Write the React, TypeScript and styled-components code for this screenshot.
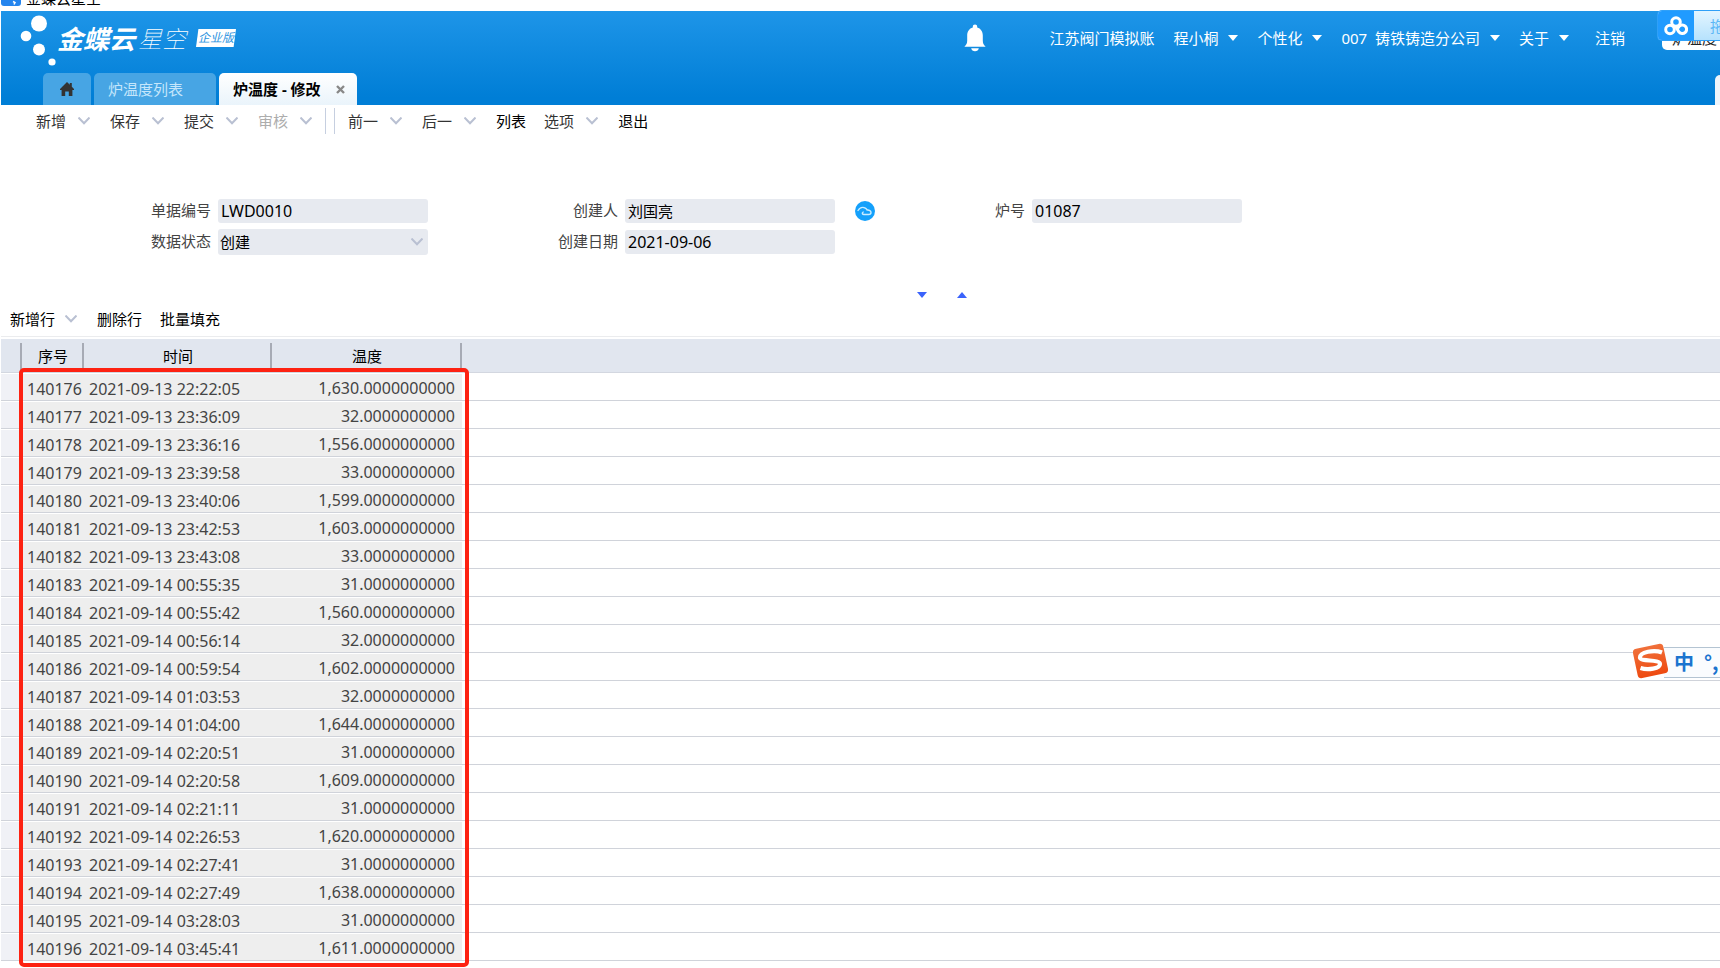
import React from "react";
import styled, { createGlobalStyle, css } from "styled-components";

const GlobalStyle = createGlobalStyle`
  *, *::before, *::after { box-sizing: border-box; }
  body {
    margin: 0;
    background: #fff;
    color: #000;
    font-family: "Noto Sans", "Noto Sans CJK SC", sans-serif;
    font-size: 15px;
    line-height: 20px;
    overflow-x: hidden;
  }
  button, input, select { font: inherit; color: inherit; }
  button { border: 0; padding: 0; background: none; cursor: pointer; white-space: nowrap; }
`;

const Page = styled.div`
  position: relative;
  padding-left: 1px;
  overflow: hidden;
`;

const WindowTitle = styled.div`
  display: flex;
  align-items: flex-end;
  gap: 5px;
  height: 11px;
  padding-bottom: 5px;
  overflow: hidden;
`;

const TitleIcon = styled.svg`
  flex: none;
  display: block;
`;

const TitleText = styled.span`
  flex: none;
  line-height: 16px;
`;

const Header = styled.header`
  background: linear-gradient(#1e95e8, #007ed6 92%);
  color: #fff;
`;

const HeaderTop = styled.div`
  display: flex;
  justify-content: space-between;
  height: 62px;
  padding-right: 95px;
`;

const Brand = styled.div`
  display: flex;
  align-items: flex-start;
  padding: 3px 0 0 19px;
`;

const BrandText = styled.div`
  display: flex;
  align-items: center;
  height: 48px;
`;

const BrandName = styled.span`
  font-family: "Noto Sans CJK SC", sans-serif;
  font-size: 26px;
  line-height: 32px;
  font-style: italic;
  font-weight: 700;
`;

const BrandSuffix = styled.span`
  padding-left: 3px;
  font-family: "Noto Sans CJK SC", sans-serif;
  font-size: 24px;
  line-height: 32px;
  font-style: italic;
  font-weight: 100;
`;

const Edition = styled.span`
  margin-left: 10px;
  width: 40px;
  background: #fff;
  color: #2b93e0;
  font-size: 12px;
  line-height: 18px;
  font-style: italic;
  text-align: center;
  clip-path: polygon(6% 0, 100% 0, 94% 100%, 0 100%);
`;

const UserNav = styled.nav`
  display: flex;
  align-items: center;
  gap: 19px;
  height: 54px;
`;

const BellButton = styled.button`
  display: flex;
  margin-right: 44px;
`;

const NavItem = styled.button<{ $last?: boolean }>`
  display: flex;
  align-items: center;
  gap: 10px;
  white-space: pre;
  ${(p) => p.$last && css`margin-left: 7px;`}
`;

const Caret = styled.svg`
  display: block;
  width: 10px;
  height: 6px;
`;

const Tabs = styled.div`
  display: flex;
  gap: 3px;
  height: 32px;
  padding-left: 42px;
`;

const Tab = styled.button<{ $width: number; $active?: boolean }>`
  display: flex;
  align-items: center;
  justify-content: ${(p) => (p.$width < 60 ? "center" : "flex-start")};
  gap: 15px;
  width: ${(p) => p.$width}px;
  padding: ${(p) => (p.$width < 60 ? "0" : "0 0 0 14px")};
  border-radius: 5px 5px 0 0;
  background: ${(p) => (p.$active ? "linear-gradient(#fff, #eaf4fb)" : "#47a5e4")};
  color: ${(p) => (p.$active ? "#000" : "#c5e6fb")};
  font-weight: ${(p) => (p.$active ? 700 : 400)};
`;

const NextTabEdge = styled.span`
  width: 5px;
  height: 30px;
  margin: 2px 0 0 auto;
  border-radius: 5px 0 0 0;
  background: #eef5fb;
`;

const Toolbar = styled.div`
  display: flex;
  align-items: center;
  height: 32px;
  padding-left: 35px;
`;

const GridToolbar = styled.div`
  display: flex;
  align-items: center;
  height: 35px;
  padding-left: 9px;
  border-bottom: 1px solid #ebecee;
`;

const ToolItem = styled.button<{ $muted?: boolean; $soft?: boolean; $menu?: boolean }>`
  display: flex;
  align-items: center;
  gap: ${(p) => (p.$menu && !p.$soft && !p.$muted ? 10 : 12)}px;
  margin-right: ${(p) => (p.$menu ? 20 : 18)}px;
  color: ${(p) => (p.$muted ? "#adadad" : p.$soft ? "#333" : "#000")};
`;

const Divider = styled.span`
  width: 10px;
  height: 26px;
  margin: 0 13px 0 -7px;
  border: solid #c6cfe0;
  border-width: 0 1px;
`;

const Form = styled.form`
  display: grid;
  grid-template-columns: repeat(3, 407px);
  grid-auto-rows: 30px;
  row-gap: 1px;
  padding: 59px 0 0 20px;
`;

const Field = styled.div<{ $column: number }>`
  grid-column: ${(p) => p.$column};
  display: flex;
  align-items: center;
`;

const Label = styled.label`
  flex: none;
  width: 190px;
  margin-right: 7px;
  padding-bottom: 2px;
  color: #444;
  text-align: right;
`;

const control = css`
  flex: none;
  width: 210px;
  border: 0;
  border-radius: 3px;
  background: #e7eaf0;
  color: #000;
  outline: none;
`;

const TextInput = styled.input<{ $latin?: boolean }>`
  ${control}
  height: 24px;
  padding: 0 3px 1px;
  font-size: ${(p) => (p.$latin ? 16 : 15)}px;
`;

const SelectWrap = styled.div`
  display: grid;
  align-items: center;
  > * { grid-area: 1 / 1; }
  > svg { justify-self: end; margin-right: 5px; pointer-events: none; }
`;

const Select = styled.select`
  ${control}
  height: 26px;
  padding: 0 2px;
  appearance: none;
`;

const CloudButton = styled.button`
  flex: none;
  display: flex;
  margin-left: 20px;
`;

const Splitter = styled.div`
  display: flex;
  align-items: center;
  gap: 30px;
  height: 45px;
  padding: 31px 0 0 916px;
`;

const SplitButton = styled.button`
  display: flex;
  color: #3b63fb;
`;

const GridArea = styled.section`
  position: relative;
  margin: 2px 0 8px;
`;

const Table = styled.table`
  width: 100%;
  table-layout: fixed;
  border-collapse: separate;
  border-spacing: 0;
  font-size: 16px;
`;

const HeadCell = styled.th<{ $plain?: boolean }>`
  height: 34px;
  padding: 1px 0 0 0;
  border-bottom: 1px solid #d3d7e0;
  background: ${(p) => (p.$plain ? "" : "linear-gradient(#a7abb5, #a7abb5) right bottom / 2px 29px no-repeat,")} #e1e6ef;
  font-size: 15px;
  font-weight: 400;
`;

const Cell = styled.td<{ $kind?: "gutter" | "value" | "amount" }>`
  height: 28px;
  padding: ${(p) => (p.$kind === "amount" ? "2px 7px 0 0" : "4px 0 0 5px")};
  border-top: 1px solid #fff;
  border-bottom: 1px solid #d0d3da;
  background: ${(p) => (p.$kind === "gutter" ? "#f0f1f6" : p.$kind ? "#eee" : "#fff")};
  background-clip: padding-box;
  color: #444;
  line-height: 22px;
  text-align: ${(p) => (p.$kind === "amount" ? "right" : "left")};
  white-space: nowrap;
`;

const Highlight = styled.div`
  position: absolute;
  top: 29px;
  bottom: -6px;
  left: 18px;
  width: 450px;
  border: 4px solid #fd2212;
  border-radius: 5px;
  pointer-events: none;
`;

const UploadWidget = styled.div`
  position: absolute;
  top: 10px;
  right: 0;
  width: 63px;
`;

const UploadBar = styled.button`
  position: relative;
  z-index: 1;
  display: flex;
  align-items: center;
  width: 100%;
  height: 31px;
  overflow: hidden;
  border: solid #2fa0f8;
  border-width: 1px 0 1px 1px;
  border-radius: 5px 0 0 5px;
  background: linear-gradient(#e3f5ff, #b6e2fd);
  color: #5cb8f7;
`;

const UploadLogo = styled.span`
  flex: none;
  display: grid;
  place-items: center;
  width: 36px;
  height: 31px;
  margin-right: 16px;
  background: #209bff;
`;

const TabHint = styled.div`
  height: 20px;
  margin: -11px 0 0 5px;
  padding-left: 10px;
  overflow: hidden;
  border-radius: 0 0 0 5px;
  background: #fff;
  color: #222;
  line-height: 16px;
  white-space: nowrap;
`;

const ImeBar = styled.div`
  position: absolute;
  top: 643px;
  right: 0;
  display: flex;
  align-items: center;
  width: 88px;
  height: 36px;
  color: #1b74cf;
  font-family: "Noto Sans CJK SC", sans-serif;
  font-size: 20px;
  font-weight: 700;
`;

const ImePanel = styled.div`
  flex: 1;
  display: flex;
  align-items: center;
  gap: 10px;
  height: 31px;
  margin: 2px 0 0 -6px;
  padding-left: 10px;
  overflow: hidden;
  border: solid #b4c4d2;
  border-width: 1px 0;
  background: #fafcfe;
`;

const ImeLogo = styled.svg`
  position: relative;
  flex: none;
`;

const Chevron = () => (
  <svg width="12" height="8" viewBox="0 0 12 8" fill="none" aria-hidden="true">
    <path d="M0.5 0.5 6 6.3 11.5 0.5" stroke="#b9c0d2" strokeWidth="2" />
  </svg>
);

const DownCaret = () => (
  <Caret viewBox="0 0 10 6" aria-hidden="true">
    <path d="M0 0h10L5 6z" fill="currentColor" />
  </Caret>
);

type Tool = { label: string; menu?: boolean; soft?: boolean; muted?: boolean };

const mainTools: Tool[] = [
  { label: "新增", menu: true, soft: true },
  { label: "保存", menu: true, soft: true },
  { label: "提交", menu: true, soft: true },
  { label: "审核", menu: true, muted: true },
];

const moreTools: Tool[] = [
  { label: "前一", menu: true, soft: true },
  { label: "后一", menu: true, soft: true },
  { label: "列表" },
  { label: "选项", menu: true, soft: true },
  { label: "退出" },
];

const gridTools: Tool[] = [{ label: "新增行", menu: true }, { label: "删除行" }, { label: "批量填充" }];

const Tools = ({ items }: { items: Tool[] }) => (
  <>
    {items.map((t) => (
      <ToolItem key={t.label} type="button" $soft={t.soft} $muted={t.muted} $menu={t.menu}>
        {t.label}
        {t.menu && <Chevron />}
      </ToolItem>
    ))}
  </>
);

const readings: [string, string][] = [
  ["2021-09-13 22:22:05", "1,630"],
  ["2021-09-13 23:36:09", "32"],
  ["2021-09-13 23:36:16", "1,556"],
  ["2021-09-13 23:39:58", "33"],
  ["2021-09-13 23:40:06", "1,599"],
  ["2021-09-13 23:42:53", "1,603"],
  ["2021-09-13 23:43:08", "33"],
  ["2021-09-14 00:55:35", "31"],
  ["2021-09-14 00:55:42", "1,560"],
  ["2021-09-14 00:56:14", "32"],
  ["2021-09-14 00:59:54", "1,602"],
  ["2021-09-14 01:03:53", "32"],
  ["2021-09-14 01:04:00", "1,644"],
  ["2021-09-14 02:20:51", "31"],
  ["2021-09-14 02:20:58", "1,609"],
  ["2021-09-14 02:21:11", "31"],
  ["2021-09-14 02:26:53", "1,620"],
  ["2021-09-14 02:27:41", "31"],
  ["2021-09-14 02:27:49", "1,638"],
  ["2021-09-14 03:28:03", "31"],
  ["2021-09-14 03:45:41", "1,611"],
];

export default function App() {
  return (
    <>
      <GlobalStyle />
      <Page>
        <WindowTitle>
          <TitleIcon width="20" height="20" viewBox="0 0 20 20">
            <rect width="20" height="20" rx="3" fill="#2585ee" />
            <path d="M12 15.500l2 1-1 2" stroke="#fff" strokeWidth="1.5" fill="none" />
          </TitleIcon>
          <TitleText>金蝶云星空</TitleText>
        </WindowTitle>

        <Header>
          <HeaderTop>
            <Brand>
              <svg width="37" height="52" viewBox="0 0 37 52" fill="#fff" aria-hidden="true">
                <circle cx="19" cy="9.500" r="8" />
                <circle cx="6" cy="22" r="5.3" />
                <circle cx="19" cy="35.500" r="6" />
                <circle cx="32" cy="48" r="3.6" />
              </svg>
              <BrandText>
                <BrandName>金蝶云</BrandName>
                <BrandSuffix>星空</BrandSuffix>
                <Edition>企业版</Edition>
              </BrandText>
            </Brand>
            <UserNav>
              <BellButton type="button" aria-label="消息">
                <svg width="22" height="28" viewBox="0 0 22 28" fill="#fff">
                  <path d="M11 0.5c1.3 0 2.2 0.9 2.2 2.3v0.6c3.6 1 5.6 4 5.6 8v5.1c0 2.8 0.8 4.3 2.8 6.2H0.4c2-1.9 2.8-3.4 2.8-6.2v-5.1c0-4 2-7 5.6-8v-0.6c0-1.4 0.9-2.3 2.2-2.3z" />
                  <path d="M7.2 24.3h7.6c-0.3 1.9-1.8 3-3.8 3s-3.5-1.1-3.8-3z" />
                </svg>
              </BellButton>
              <NavItem type="button">江苏阀门模拟账</NavItem>
              <NavItem type="button">程小桐<DownCaret /></NavItem>
              <NavItem type="button">个性化<DownCaret /></NavItem>
              <NavItem type="button">{"007  铸铁铸造分公司"}<DownCaret /></NavItem>
              <NavItem type="button">关于<DownCaret /></NavItem>
              <NavItem type="button" $last>注销</NavItem>
            </UserNav>
          </HeaderTop>
          <Tabs>
            <Tab type="button" $width={48} aria-label="首页">
              <svg width="14" height="14" viewBox="0 0 14 14" fill="#333">
                <path d="M7 0 9.8 2.8V1h2v3.8L14 7v1h-1.6v6H8.8V9.5H5.2V14H1.6V8H0V7z" />
              </svg>
            </Tab>
            <Tab type="button" $width={122}>炉温度列表</Tab>
            <Tab type="button" $width={138} $active>
              炉温度 - 修改
              <svg width="9" height="9" viewBox="0 0 9 9" aria-hidden="true">
                <path d="M1 1l7 7M8 1 1 8" stroke="#888" strokeWidth="2.4" />
              </svg>
            </Tab>
            <NextTabEdge />
          </Tabs>
        </Header>

        <Toolbar>
          <Tools items={mainTools} />
          <Divider />
          <Tools items={moreTools} />
        </Toolbar>

        <Form>
          <Field $column={1}>
            <Label htmlFor="billNo">单据编号</Label>
            <TextInput id="billNo" $latin readOnly defaultValue="LWD0010" />
          </Field>
          <Field $column={2}>
            <Label htmlFor="creator">创建人</Label>
            <TextInput id="creator" readOnly defaultValue="刘国亮" />
            <CloudButton type="button" aria-label="云之家">
              <svg width="20" height="20" viewBox="0 0 20 20" fill="none">
                <circle cx="10" cy="10" r="10" fill="#14a0fb" />
                <path d="M3 9.5c1.5-2.6 4.5-4 7.3-2.4 1 .6 1.600 1.300 1.900 2 2-.3 3.800.9 3.800 2.400 0 1.300-1 2-2.300 2H9c-1.600 0-2.500-1.500-.8-2.500" stroke="#c9ecff" strokeWidth="1.400" strokeLinecap="round" />
              </svg>
            </CloudButton>
          </Field>
          <Field $column={3}>
            <Label htmlFor="furnaceNo">炉号</Label>
            <TextInput id="furnaceNo" $latin readOnly defaultValue="01087" />
          </Field>
          <Field $column={1}>
            <Label htmlFor="status">数据状态</Label>
            <SelectWrap>
              <Select id="status" defaultValue="创建">
                <option>创建</option>
              </Select>
              <Chevron />
            </SelectWrap>
          </Field>
          <Field $column={2}>
            <Label htmlFor="createDate">创建日期</Label>
            <TextInput id="createDate" $latin readOnly defaultValue="2021-09-06" />
          </Field>
        </Form>

        <Splitter>
          <SplitButton type="button" aria-label="展开">
            <svg width="10" height="6" viewBox="0 0 10 6"><path d="M0 0h10L5 6z" fill="currentColor" /></svg>
          </SplitButton>
          <SplitButton type="button" aria-label="收起">
            <svg width="10" height="6" viewBox="0 0 10 6"><path d="M0 6h10L5 0z" fill="currentColor" /></svg>
          </SplitButton>
        </Splitter>

        <GridToolbar>
          <Tools items={gridTools} />
        </GridToolbar>

        <GridArea>
          <Table>
            <colgroup>
              <col style={{ width: 21 }} />
              <col style={{ width: 62 }} />
              <col style={{ width: 188 }} />
              <col style={{ width: 190 }} />
              <col />
            </colgroup>
            <thead>
              <tr>
                <HeadCell />
                <HeadCell>序号</HeadCell>
                <HeadCell>时间</HeadCell>
                <HeadCell>温度</HeadCell>
                <HeadCell $plain />
              </tr>
            </thead>
            <tbody>
              {readings.map(([time, temp], i) => (
                <tr key={i}>
                  <Cell $kind="gutter" />
                  <Cell $kind="value">{140176 + i}</Cell>
                  <Cell $kind="value">{time}</Cell>
                  <Cell $kind="amount">{temp + ".0000000000"}</Cell>
                  <Cell />
                </tr>
              ))}
            </tbody>
          </Table>
          <Highlight />
        </GridArea>

        <UploadWidget>
          <UploadBar type="button">
            <UploadLogo>
              <svg width="24" height="20" viewBox="0 0 24 20" fill="none" stroke="#fff" strokeWidth="3">
                <circle cx="12" cy="6" r="4.300" />
                <circle cx="6" cy="13.500" r="4.300" />
                <path d="M11 9.500l4 6.500a4.300 4.300 0 1 0 0-5.500l-1.500 2" />
              </svg>
            </UploadLogo>
            拖
          </UploadBar>
          <TabHint>炉温度</TabHint>
        </UploadWidget>

        <ImeBar>
          <ImeLogo width="38" height="36" viewBox="0 0 38 36">
            <defs>
              <linearGradient id="ime" x1="0" y1="0" x2="0" y2="1">
                <stop offset="0" stopColor="#f0703a" />
                <stop offset="1" stopColor="#ee4a10" />
              </linearGradient>
            </defs>
            <rect x="3" y="3" width="31" height="30" rx="4" fill="url(#ime)" transform="rotate(-12 18.500 18)" />
            <path d="M30 9.500C22 6.500 8 9 8 14.500c0 4.500 20 1.500 20 6.500 0 4.500-12 6.500-19.500 4" stroke="#fff" strokeWidth="4.200" fill="none" />
          </ImeLogo>
          <ImePanel>
            <span>中</span>
            <span>°,</span>
          </ImePanel>
        </ImeBar>
      </Page>
    </>
  );
}
